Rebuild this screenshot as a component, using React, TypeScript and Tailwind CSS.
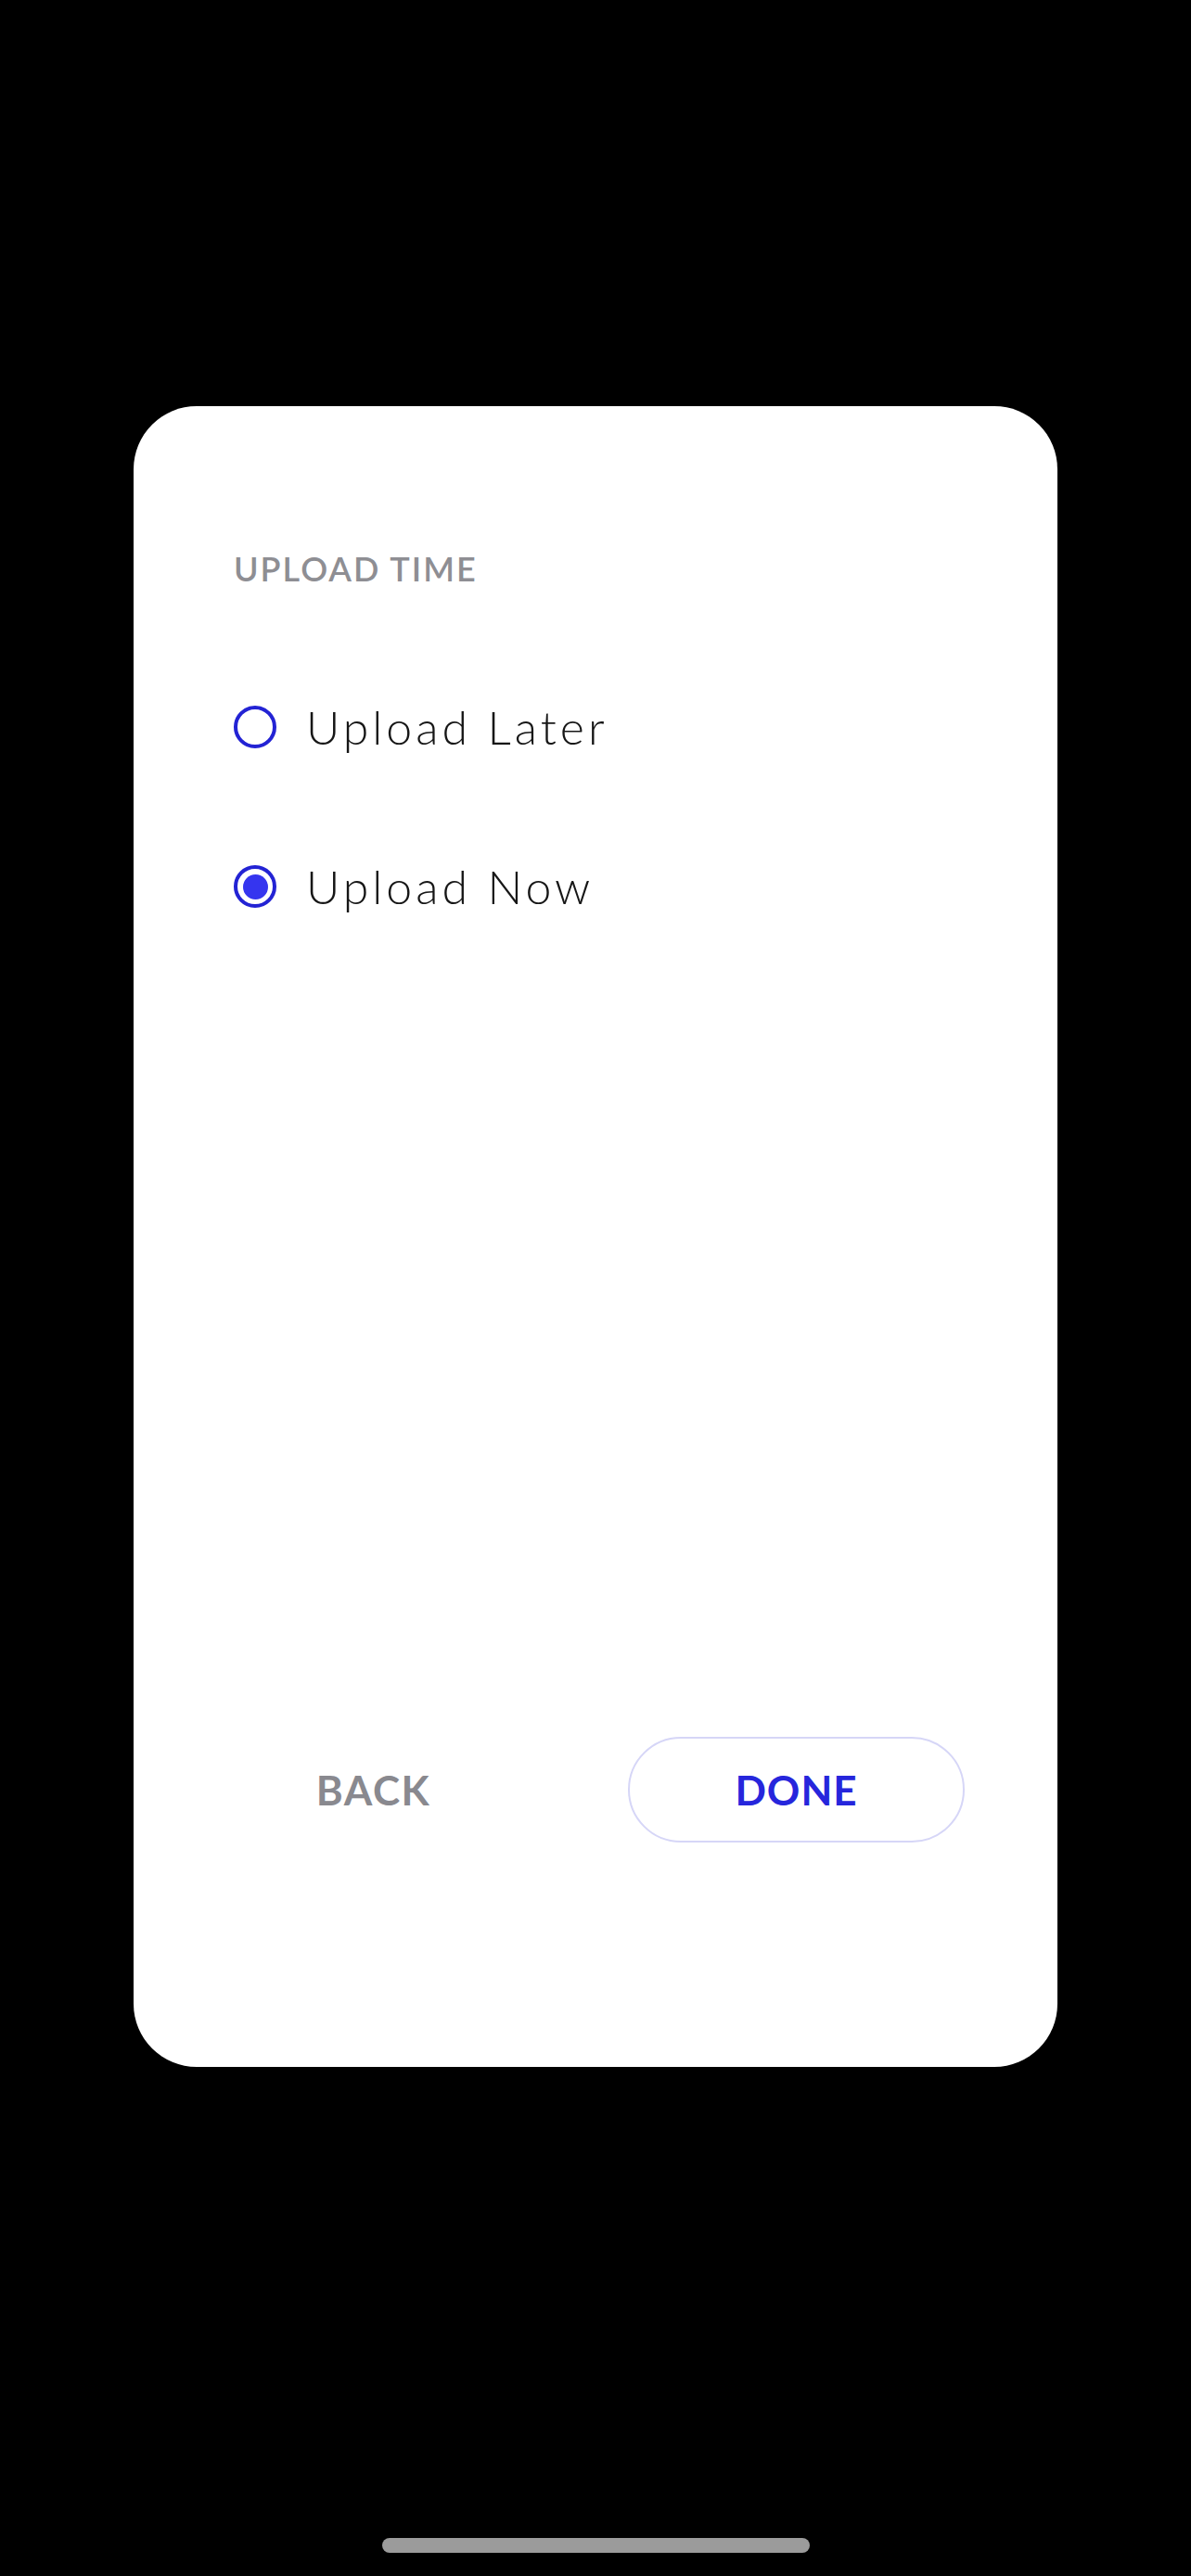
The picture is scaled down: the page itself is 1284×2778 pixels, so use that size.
import { useState } from "react";

type Option = { id: string; label: string };

const options: Option[] = [
  { id: "later", label: "Upload Later" },
  { id: "now", label: "Upload Now" },
];

function Radio({ checked }: { checked: boolean }) {
  return (
    <span className="flex h-[46px] w-[46px] shrink-0 items-center justify-center rounded-full border-[4px] border-[#2323d4]">
      {checked && <span className="h-[27px] w-[27px] rounded-full bg-[#3535ef]" />}
    </span>
  );
}

export default function App() {
  const [selected, setSelected] = useState<string>("now");

  return (
    <main className="flex h-[2778px] w-full flex-col items-center bg-black font-['Lato',sans-serif]">
      <section className="mt-[438px] flex h-[1791px] w-[996px] flex-col rounded-[68px] bg-white">
        <div className="flex flex-col pl-[108px] pt-[157px]">
          <h2 className="text-[36px] font-semibold uppercase leading-none tracking-[2px] text-[#8e8e93]">
            Upload Time
          </h2>
          <div className="mt-[128px] flex flex-col gap-[122px]">
            {options.map((o) => (
              <button
                key={o.id}
                onClick={() => setSelected(o.id)}
                className="flex h-[50px] items-center gap-[32px] text-left"
              >
                <Radio checked={selected === o.id} />
                <span className="text-[50px] font-light leading-none tracking-[4px] text-[#161616]">{o.label}</span>
              </button>
            ))}
          </div>
        </div>

        {/* Footer */}
        <div className="mt-auto flex items-center gap-[93px] pb-[242px] pl-[77px]">
          <button className="flex h-[114px] w-[363px] items-center justify-center text-[44px] font-bold leading-none tracking-[1.5px] text-[#89898f]">
            BACK
          </button>
          <button className="flex h-[114px] w-[363px] items-center justify-center rounded-full border-2 border-[#d6d6f7] text-[44px] font-bold leading-none tracking-[1px] text-[#2626dc]">
            DONE
          </button>
        </div>
      </section>
      <div className="mt-auto mb-[25px] h-[16px] w-[461px] rounded-full bg-[#9b9b9b]" />
    </main>
  );
}
